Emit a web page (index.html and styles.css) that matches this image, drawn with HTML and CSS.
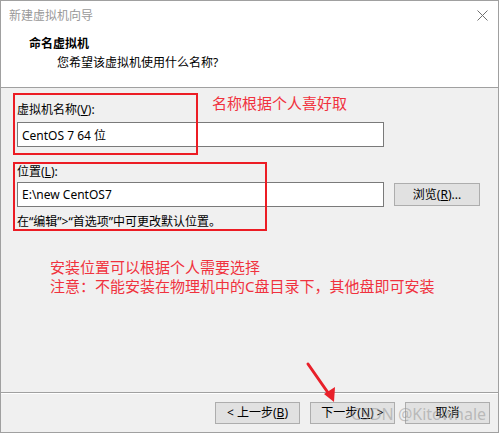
FILE: index.html
```html
<!DOCTYPE html>
<html lang="zh-CN">
<head>
    <meta charset="UTF-8">
    <title>新建虚拟机向导</title>
    <link rel="stylesheet" href="styles.css">
</head>
<body>
    <div class="wizard">
        <div class="head">
            <div class="titlebar">
                <span class="win-title">新建虚拟机向导</span>
                <svg class="close" width="11" height="11" viewBox="0 0 11 11">
                    <path d="M0.5 0.5 L10.5 10.5 M10.5 0.5 L0.5 10.5" stroke="#707070" stroke-width="1" fill="none"/>
                </svg>
            </div>
            <div class="head-title">命名虚拟机</div>
            <div class="head-sub">您希望该虚拟机使用什么名称?</div>
        </div>

        <div class="body">
            <div class="form">
                <label class="field-label">虚拟机名称(<u>V</u>):</label>
                <input class="text-input" type="text" value="CentOS 7 64 位">

                <label class="field-label loc-label">位置(<u>L</u>):</label>
                <div class="loc-row">
                    <input class="text-input" type="text" value="E:\new CentOS7">
                    <button class="btn btn-browse">浏览(<u>R</u>)...</button>
                </div>
                <div class="hint">在“编辑”&gt;“首选项”中可更改默认位置。</div>
            </div>

            <div class="note">
                安装位置可以根据个人需要选择<br>
                注意：不能安装在物理机中的C盘目录下，其他盘即可安装
            </div>

            <div class="footer">
                <button class="btn">&lt; 上一步(<u>B</u>)</button>
                <button class="btn">下一步(<u>N</u>) &gt;</button>
                <button class="btn">取消</button>
            </div>
        </div>

        <!-- annotations drawn over the dialog -->
        <div class="mark mark-name"></div>
        <div class="mark mark-loc"></div>
        <div class="mark-text">名称根据个人喜好取</div>
        <svg class="arrow" width="40" height="50" viewBox="0 0 40 50">
            <path d="M4 3 L27 36" stroke="#e8202a" stroke-width="3" stroke-linecap="round" fill="none"/>
            <path d="M30 41 L20 33 L31 26 Z" fill="#e8202a"/>
        </svg>
        <div class="watermark">CSDN @Kitowhale</div>
    </div>
</body>
</html>
```

FILE: styles.css
```css
* {
    margin: 0;
    padding: 0;
    box-sizing: border-box;
}

body {
    font-family: "Noto Sans", "Noto Sans CJK SC", sans-serif;
    font-size: 12px;
    line-height: 16px;
    color: #000;
    background: #f0f0f0;
}

.wizard {
    position: relative;
    width: 499px;
    height: 433px;
    border: 1px solid #a0a0a0;
    background: #f0f0f0;
    display: flex;
    flex-direction: column;
}

.head {
    height: 87px;
    background: #fff;
    border-bottom: 1px solid #a0a0a0;
}

.titlebar {
    height: 29px;
    display: flex;
    align-items: center;
    justify-content: space-between;
    padding: 0 10px 0 8px;
}

.win-title {
    color: #999;
}

.head-title {
    font-weight: bold;
    margin: 6px 0 0 28px;
}

.head-sub {
    margin: 3px 0 0 56px;
}

.body {
    flex: 1;
    display: flex;
    flex-direction: column;
}

.form {
    padding: 14px 0 0 16px;
    display: flex;
    flex-direction: column;
}

.field-label {
    display: block;
}

.loc-label {
    margin-top: 17px;
}

.text-input {
    width: 367px;
    height: 25px;
    margin-top: 4px;
    border: 1px solid #7a7a7a;
    background: #fff;
    font: inherit;
    padding: 0 4px;
    outline: none;
}

.loc-row {
    display: flex;
    align-items: center;
    gap: 10px;
    margin-top: -2px;
}

.hint {
    margin-top: 7px;
}

.note {
    margin: 28px 0 0 49px;
    font-size: 15px;
    line-height: 19px;
    color: #f0323e;
}

.footer {
    margin-top: auto;
    height: 40px;
    border-top: 1px solid #a0a0a0;
    box-shadow: inset 0 1px 0 #fff;
    display: flex;
    justify-content: flex-end;
    align-items: center;
    gap: 10px;
    padding: 0 8px 0 0;
}

.btn {
    width: 85px;
    height: 22px;
    border: 1px solid #adadad;
    background: #e1e1e1;
    font: inherit;
    color: #000;
}

.btn-browse {
    width: 86px;
    height: 23px;
    margin-top: 4px;
}

.mark {
    position: absolute;
    border: 2px solid #ec1c24;
}

.mark-name {
    left: 12px;
    top: 92px;
    width: 185px;
    height: 62px;
}

.mark-loc {
    left: 12px;
    top: 161px;
    width: 254px;
    height: 69px;
}

.mark-text {
    position: absolute;
    left: 211px;
    top: 93px;
    font-size: 15px;
    line-height: 19px;
    color: #f0323e;
}

.arrow {
    position: absolute;
    left: 303px;
    top: 360px;
}

.watermark {
    position: absolute;
    left: 350px;
    top: 403px;
    font-size: 16px;
    line-height: 20px;
    color: rgba(150, 150, 150, 0.55);
}
```
